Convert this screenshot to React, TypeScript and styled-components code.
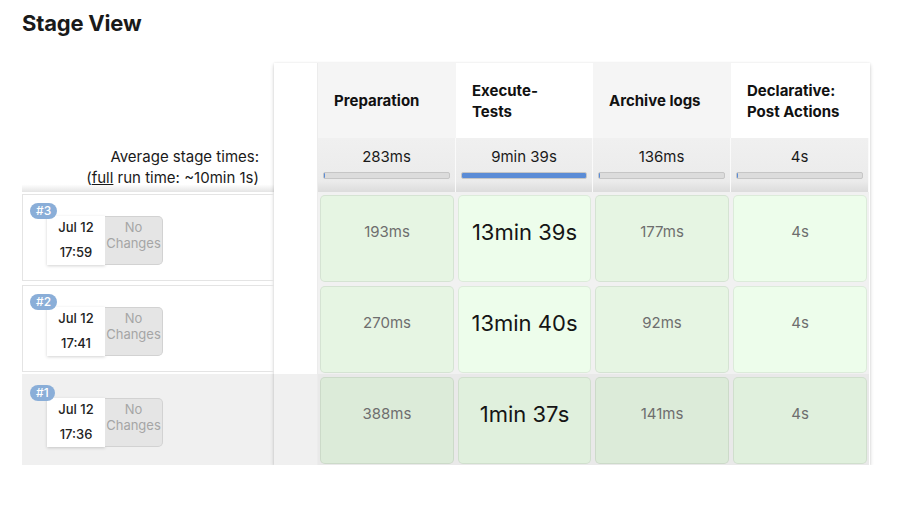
import React from "react";
import styled, { createGlobalStyle } from "styled-components";

const GlobalStyle = createGlobalStyle`
  body {
    margin: 0;
    background: #fff;
    font-family: Inter, "Noto Sans", "Liberation Sans", sans-serif;
    color: #1a1a1a;
  }
`;

const Page = styled.div`
  padding: 8px 0 0 22px;
`;

const Title = styled.h1`
  margin: 0 0 25px;
  font-size: 22px;
  line-height: 30px;
  font-weight: 700;
  letter-spacing: -0.2px;
`;

const Layout = styled.div`
  display: flex;
  align-items: flex-start;
`;

const Side = styled.div`
  width: 252px;
  display: flex;
  flex-direction: column;
`;

const SideSpacer = styled.div`
  height: 75px;
`;

const AvgLabel = styled.div`
  height: 54px;
  box-sizing: border-box;
  padding: 8px 15px 0 0;
  text-align: right;
  font-size: 15px;
  line-height: 21px;
  background: linear-gradient(to bottom, #fff 86%, #e4e4e4 100%);

  a {
    color: inherit;
  }
`;

const BuildRow = styled.div<{ $muted?: boolean }>`
  height: 91px;
  box-sizing: border-box;
  padding: 2px 0;
  background: ${(p) => (p.$muted ? "#f0f0f0" : "#fff")};
`;

const BuildInner = styled.div<{ $muted?: boolean }>`
  position: relative;
  height: 100%;
  box-sizing: border-box;
  border: 1px solid ${(p) => (p.$muted ? "transparent" : "#e4e4e4")};
  border-right: none;
  padding: 21px 0 0 24px;
`;

const Badge = styled.span`
  position: absolute;
  left: 7px;
  top: 8px;
  z-index: 1;
  padding: 0 6px;
  height: 16px;
  line-height: 16px;
  border-radius: 8px;
  background: #8aaed8;
  color: #fff;
  font-size: 12px;
  font-weight: 500;
`;

const BuildCard = styled.div`
  display: flex;
  width: 116px;
  height: 49px;
`;

const DateBox = styled.div`
  width: 58px;
  background: #fff;
  box-shadow: 0 1px 3px rgba(0, 0, 0, 0.18);
  display: flex;
  flex-direction: column;
  align-items: center;
  justify-content: space-between;
  font-size: 13px;
  line-height: 16px;
  font-weight: 500;
  color: #222;
  padding: 3px 0 5px;
  box-sizing: border-box;
`;

const Changes = styled.div`
  flex: 1;
  background: #e5e5e5;
  border: 1px solid #d2d2d2;
  border-left: none;
  border-radius: 0 5px 5px 0;
  color: #a5a5a5;
  font-size: 13px;
  line-height: 16px;
  text-align: center;
  padding-top: 2px;
`;

const Table = styled.div`
  width: 596px;
  box-shadow: 0 2px 4px rgba(0, 0, 0, 0.18), 0 0 2px rgba(0, 0, 0, 0.08);
`;

const Row = styled.div<{ $h: number }>`
  display: grid;
  grid-template-columns: 44px 138px 137px 138px 138px;
  height: ${(p) => p.$h}px;
`;

const Gutter = styled.div<{ $muted?: boolean }>`
  background: ${(p) => (p.$muted ? "#f0f0f0" : "#fff")};
  border-right: 1px solid #ececec;
`;

const Head = styled.div<{ $alt?: boolean }>`
  display: flex;
  align-items: center;
  padding: 0 22px 0 16px;
  background: ${(p) => (p.$alt ? "#fff" : "#f5f5f5")};
  font-size: 15px;
  font-weight: 700;
  line-height: 21px;
  color: #111;
`;

const AvgCell = styled.div`
  background: linear-gradient(to bottom, #f0f0f0 0%, #ebebeb 80%, #dcdcdc 100%);
  border-right: 1px solid #fafafa;
  text-align: center;
  font-size: 15px;
  padding-top: 9px;
  box-sizing: border-box;
`;

const Bar = styled.div`
  margin: 6px 5px 0;
  height: 5px;
  background: #dcdcdc;
  border: 1px solid #c6c6c6;
  border-radius: 2px;
  overflow: hidden;
`;

const BarFill = styled.div`
  height: 100%;
  background: #5b8cd6;
`;

const CellWrap = styled.div<{ $muted?: boolean }>`
  padding: 3px 2px 1px;
  background: ${(p) => (p.$muted ? "#e9e9e9" : "#f1f1f1")};
`;

const Cell = styled.div<{ $bg: string; $big?: boolean }>`
  height: 100%;
  box-sizing: border-box;
  display: flex;
  align-items: center;
  justify-content: center;
  border-radius: 5px;
  border: 1px solid rgba(0, 0, 0, 0.07);
  background: ${(p) => p.$bg};
  font-size: ${(p) => (p.$big ? "22px" : "15px")};
  color: ${(p) => (p.$big ? "#151515" : "#6e6e6e")};
  padding-bottom: 14px;
`;

const stages = ["Preparation", "Execute-Tests", "Archive logs", "Declarative: Post Actions"];
const averages = [
  { t: "283ms", pct: 0.5 },
  { t: "9min 39s", pct: 100 },
  { t: "136ms", pct: 0.3 },
  { t: "4s", pct: 0.7 },
];

const builds = [
  { id: 3, time: "17:59", cells: ["193ms", "13min 39s", "177ms", "4s"] },
  { id: 2, time: "17:41", cells: ["270ms", "13min 40s", "92ms", "4s"] },
  { id: 1, time: "17:36", cells: ["388ms", "1min 37s", "141ms", "4s"] },
];

const cellColor = (muted: boolean, col: number) => {
  const alt = col % 2 === 1;
  if (muted) return alt ? "#e0f0dd" : "#dcebd9";
  return alt ? "#edfdeb" : "#e6f5e3";
};

const App: React.FC = () => {
  return (
    <Page>
      <GlobalStyle />
      <Title>Stage View</Title>
      <Layout>
        <Side>
          <SideSpacer />
          <AvgLabel>
            Average stage times:
            <br />(<a href="#">full</a> run time: ~10min 1s)
          </AvgLabel>
          {builds.map((b) => (
            <BuildRow key={b.id} $muted={b.id === 1}>
              <BuildInner $muted={b.id === 1}>
                <Badge>#{b.id}</Badge>
                <BuildCard>
                  <DateBox>
                    <span>Jul 12</span>
                    <span>{b.time}</span>
                  </DateBox>
                  <Changes>
                    No
                    <br />
                    Changes
                  </Changes>
                </BuildCard>
              </BuildInner>
            </BuildRow>
          ))}
        </Side>

        <Table>
          <Row $h={75}>
            <Gutter />
            {stages.map((s, i) => (
              <Head key={s} $alt={i % 2 === 1}>
                {s}
              </Head>
            ))}
          </Row>
          <Row $h={54}>
            <Gutter />
            {averages.map((a) => (
              <AvgCell key={a.t}>
                {a.t}
                <Bar>
                  <BarFill style={{ width: `${a.pct}%` }} />
                </Bar>
              </AvgCell>
            ))}
          </Row>
          {builds.map((b) => {
            const muted = b.id === 1;
            return (
              <Row key={b.id} $h={91}>
                <Gutter $muted={muted} />
                {b.cells.map((c, i) => (
                  <CellWrap key={i} $muted={muted}>
                    <Cell $bg={cellColor(muted, i)} $big={i === 1}>
                      {c}
                    </Cell>
                  </CellWrap>
                ))}
              </Row>
            );
          })}
        </Table>
      </Layout>
    </Page>
  );
};

export default App;
